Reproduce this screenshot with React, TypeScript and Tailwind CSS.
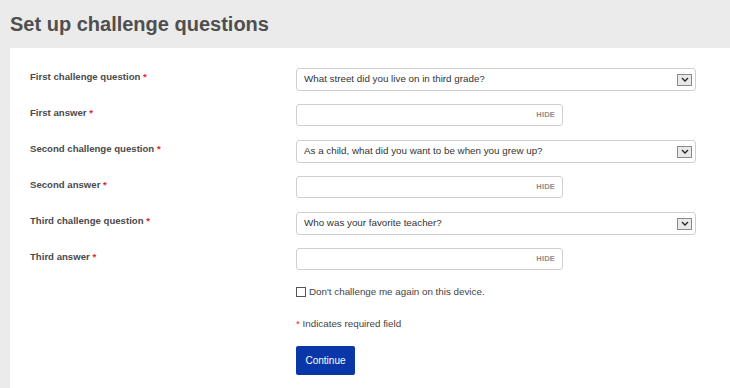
import React from 'react'

interface Row {
  label: string
  kind: 'select' | 'input'
  value?: string
}

const rows: Row[] = [
  { label: 'First challenge question', kind: 'select', value: 'What street did you live on in third grade?' },
  { label: 'First answer', kind: 'input' },
  { label: 'Second challenge question', kind: 'select', value: 'As a child, what did you want to be when you grew up?' },
  { label: 'Second answer', kind: 'input' },
  { label: 'Third challenge question', kind: 'select', value: 'Who was your favorite teacher?' },
  { label: 'Third answer', kind: 'input' },
]

function SelectBox({ value }: { value?: string }) {
  return (
    <div className="flex items-center justify-between w-[400px] h-[23px] border border-[#cfcfcf] rounded-[3px] bg-white pl-[7px] pr-[3px]">
      <span className="text-[9.8px] text-[#333]">{value}</span>
      <span className="flex items-center justify-center w-[15px] h-[12px] border border-[#8a8a8a] bg-[#e9e9e9]">
        <svg width="8" height="5" viewBox="0 0 8 5">
          <path d="M1 1 L4 4 L7 1" fill="none" stroke="#222" strokeWidth="1.3" />
        </svg>
      </span>
    </div>
  )
}

function AnswerBox() {
  return (
    <div className="flex items-center justify-end w-[267px] h-[22px] border border-[#cfcfcf] rounded-[3px] bg-white pr-[7px]">
      <span className="text-[7.5px] font-bold text-[#8c8c8c] tracking-[0.2px]">HIDE</span>
    </div>
  )
}

export default function App() {
  return (
    <div className="w-[730px] h-[388px] bg-[#ebebeb] overflow-hidden flex flex-col" style={{ fontFamily: '"Liberation Sans", Arial, sans-serif' }}>
      <h1 className="pl-[10px] pt-[12px] pb-[12px] text-[20px] leading-[24px] font-bold text-[#4f4f4f]">
        Set up challenge questions
      </h1>

      <div className="ml-[10px] flex-1 bg-white pl-[20px] pt-[20px]">
        {rows.map((row) => (
          <div key={row.label} className="flex h-[36px]">
            <div className="w-[266px] pt-[1px] text-[9.6px] leading-[16px] font-bold text-[#4a4a4a]">
              {row.label} <span className="text-[#e0261f]">*</span>
            </div>
            <div>{row.kind === 'select' ? <SelectBox value={row.value} /> : <AnswerBox />}</div>
          </div>
        ))}

        <div className="flex">
          <div className="w-[266px]" />
          <div className="flex flex-col">
            <label className="flex items-center h-[16px] text-[9.8px] text-[#444]">
              <span className="w-[10px] h-[10px] border border-[#555] mr-[3px] bg-white" />
              Don't challenge me again on this device.
            </label>
            <div className="mt-[16px] text-[9.8px] leading-[16px] text-[#444]">
              <span className="text-[#e0261f]">*</span> Indicates required field
            </div>
            <button className="mt-[14px] w-[59px] h-[29px] rounded-[2px] bg-[#0a37a8] text-white text-[10px]">
              Continue
            </button>
          </div>
        </div>
      </div>
    </div>
  )
}
